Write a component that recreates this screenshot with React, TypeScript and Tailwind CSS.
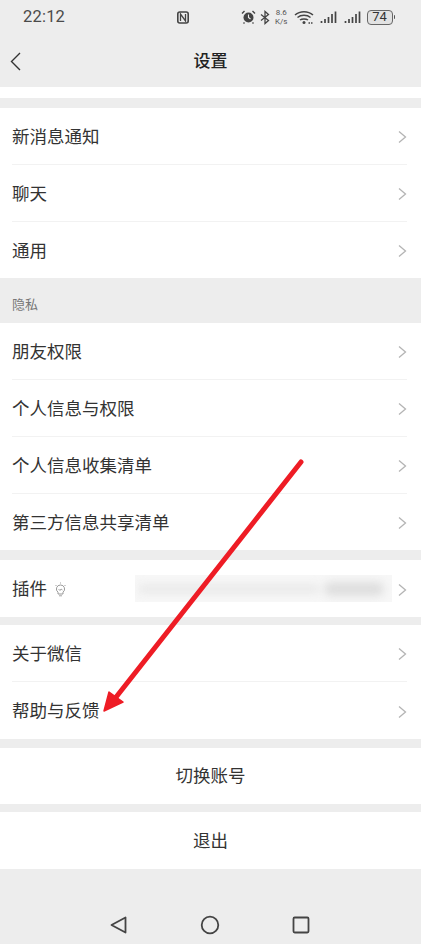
const group1 = ["新消息通知", "聊天", "通用"];
const group2 = ["朋友权限", "个人信息与权限", "个人信息收集清单", "第三方信息共享清单"];
const group3 = ["关于微信", "帮助与反馈"];

function Row({ label, last, children }: { label: string; last?: boolean; children?: React.ReactNode }) {
  return (
    <div className={`flex items-center pl-3 pr-[14px] ${last ? "flex-1" : "h-[57px]"}`}>
      <div className={`flex h-full w-full items-center pt-[2px] ${last ? "" : "border-b border-[#f2f2f2]"}`}>
        <span className="text-[17.5px] text-[#333]">{label}</span>
        {children}
        <svg width="9" height="14" viewBox="0 0 9 14" className="ml-auto">
          <path d="M1 1.500 7.500 7 1 12.500" stroke="#b4b4b4" strokeWidth="1.300" fill="none" />
        </svg>
      </div>
    </div>
  );
}

function Group({ items, height }: { items: string[]; height: string }) {
  return (
    <div className={`flex flex-col bg-white ${height}`}>
      {items.map((item, i) => (
        <Row key={item} label={item} last={i === items.length - 1} />
      ))}
    </div>
  );
}

function StatusIcons() {
  return (
    <div className="flex items-center text-[#444]">
      <svg width="15" height="14" viewBox="0 0 15 14" className="mr-[4px]">
        <circle cx="7.500" cy="7.500" r="5" fill="#444" />
        <path d="M1 3.500 3.500 1M14 3.500 11.500 1M3.500 12.500 2.500 13.500M11.500 12.500 12.500 13.500" stroke="#444" strokeWidth="1.400" />
        <path d="M7.500 4.500V7.500L9.500 9" stroke="#eee" strokeWidth="1.100" fill="none" />
      </svg>
      <svg width="10" height="15" viewBox="0 0 10 15" className="mr-[5px]">
        <path d="M1 4.500 8.500 10.500 5 13.500V1.500L8.500 4.500 1 10.500" stroke="#444" strokeWidth="1.300" fill="none" />
      </svg>
      <div className="mr-[6px] flex flex-col items-center font-['Roboto',sans-serif] text-[8px] leading-[9px] text-[#555]">
        <span>8.6</span>
        <span>K/s</span>
      </div>
      <svg width="20" height="15" viewBox="0 0 20 15" className="mr-[6px]">
        <path d="M1 5C6 .5 14 .5 19 5M3.500 7.500C7 4.500 13 4.500 16.500 7.500M6 10C8 8.500 12 8.500 14 10" stroke="#444" strokeWidth="1.500" fill="none" />
        <circle cx="10" cy="12.500" r="1.500" fill="#444" />
        <path d="M14.500 13H19" stroke="#444" strokeWidth="1.500" strokeDasharray="1.500 1" />
      </svg>
      <svg width="18" height="13" viewBox="0 0 18 13" className="mr-[6px]">
        <path d="M1.500 10V12M5 8V12M8.500 6V12M12 3V12M15.500 .5V12" stroke="#444" strokeWidth="1.700" />
      </svg>
      <svg width="18" height="13" viewBox="0 0 18 13" className="mr-[5px]">
        <path d="M1.500 10V12M5 8V12M8.500 6V12M12 3V12M15.500 .5V12" stroke="#444" strokeWidth="1.700" />
      </svg>
      <div className="flex h-[15px] w-[26px] items-center justify-center rounded-[4px] border border-[#666] bg-[#e2e2e2] font-['Roboto',sans-serif] text-[13px] text-[#333]">
        74
      </div>
      <div className="ml-[1px] h-[4px] w-[1.500px] rounded-r-sm bg-[#555]" />
    </div>
  );
}

export default function App() {
  return (
    <div className="relative flex h-[944px] w-[421px] flex-col overflow-hidden bg-[#ededed] font-['Liberation_Sans','Noto_Sans_CJK_SC',sans-serif]">
      <div className="flex h-[34px] items-center pl-[23px] pr-[26px]">
        <span className="w-[154px] font-['Roboto',sans-serif] text-[16.500px] tracking-[.2px] text-[#4a4a4a]">22:12</span>
        <svg width="12" height="13" viewBox="0 0 12 13">
          <rect x=".8" y="1" width="10.400" height="11" rx="2" fill="none" stroke="#444" strokeWidth="1.600" />
          <path d="M3.500 10V3L8.500 10V3" stroke="#444" strokeWidth="1.300" fill="none" />
        </svg>
        <div className="ml-auto">
          <StatusIcons />
        </div>
      </div>

      <div className="relative flex h-[53px] items-center justify-center pt-[3px]">
        <svg width="11" height="19" viewBox="0 0 11 19" className="absolute left-[10px] top-[18px]">
          <path d="M10 1 1.500 9.500 10 18" stroke="#333" strokeWidth="1.400" fill="none" />
        </svg>
        <span className="text-[17px] font-medium text-[#222]">设置</span>
      </div>

      <div className="h-[11px] bg-white" />
      <div className="h-[10px]" />
      <Group items={group1} height="h-[170px]" />

      <div className="flex h-[45px] items-end pb-[9px] pl-3 text-[13px] leading-[18px] text-[#777]">隐私</div>
      <Group items={group2} height="h-[227px]" />

      <div className="h-[10px]" />
      <div className="flex h-[57px] flex-col bg-white">
        <Row label="插件" last>
          <svg width="13" height="15" viewBox="0 0 13 15" className="ml-[7px]">
            <path d="M6.500 3a4 4 0 0 0-2.500 7.200V12h5v-1.800A4 4 0 0 0 6.500 3Z" stroke="#999" strokeWidth="1" fill="none" />
            <path d="M4.500 7 6 8.500 7 7l1.500 1M5 13.800h3M1.500 3l1 1M11.500 3l-1 1M6.500 .5V1.500" stroke="#999" strokeWidth=".9" fill="none" />
          </svg>
          <div className="mb-[2px] ml-[68px] h-[27px] w-[257px] overflow-hidden bg-[#f7f7f7]">
            <div className="mx-1 mt-[7px] flex h-[14px] items-center blur-[4px]">
              <div className="h-[8px] w-[180px] bg-[#e8e8e8]" />
              <div className="ml-[5px] h-[14px] w-[60px] rounded-full bg-[#dedede]" />
            </div>
          </div>
        </Row>
      </div>

      <div className="h-[8px]" />
      <Group items={group3} height="h-[114px]" />

      <div className="h-[9px]" />
      <div className="flex h-[56px] items-center justify-center bg-white text-[17.500px] text-[#333]">切换账号</div>
      <div className="h-[8px]" />
      <div className="flex h-[57px] items-center justify-center bg-white pt-[2px] text-[17.500px] text-[#333]">退出</div>

      <div className="mt-[46px] flex items-center gap-[71px] pl-[109px]">
        <svg width="20" height="20" viewBox="0 0 20 20">
          <path d="M2.500 10 16.500 2.500V17.500Z" stroke="#444" strokeWidth="1.800" strokeLinejoin="round" fill="none" />
        </svg>
        <svg width="20" height="20" viewBox="0 0 20 20">
          <circle cx="10" cy="10" r="8.300" stroke="#444" strokeWidth="1.800" fill="none" />
        </svg>
        <svg width="20" height="20" viewBox="0 0 20 20">
          <rect x="2.500" y="2.500" width="15" height="15" rx="1.200" stroke="#444" strokeWidth="1.800" fill="none" />
        </svg>
      </div>

      {/* red arrow drawn over the list */}
      <svg className="pointer-events-none absolute left-0 top-0" width="421" height="944" viewBox="0 0 421 944">
        <path d="M301 462 113 701" stroke="#ee1c25" strokeWidth="5" strokeLinecap="round" />
        <path d="M104 711 109 692 123 702Z" fill="#ee1c25" stroke="#ee1c25" strokeWidth="1.500" strokeLinejoin="round" />
      </svg>
    </div>
  );
}
